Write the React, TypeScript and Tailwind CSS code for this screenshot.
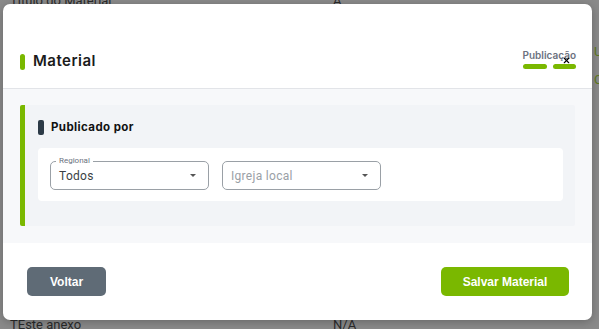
import { X } from "lucide-react";

function Select({ label, value, placeholder }: { label?: string; value?: string; placeholder?: string }) {
  return (
    <div className="relative w-[159px] h-[29px] rounded-[5px] border border-[#9aa0a6] flex items-center pl-[8px] pr-[12px]">
      {label && (
        <span className="absolute -top-[6px] left-[5px] px-[3px] bg-white text-[8px] leading-[10px] text-[#6b7280]">
          {label}
        </span>
      )}
      <span className={`flex-1 text-[12px] tracking-[0.3px] ${value ? "text-[#3a3f44]" : "text-[#9aa0a6]"}`}>
        {value ?? placeholder}
      </span>
      <svg width="6" height="3" viewBox="0 0 6 3">
        <path d="M0 0h6L3 3z" fill="#555" />
      </svg>
    </div>
  );
}

export default function App() {
  return (
    <div
      className="relative w-[599px] h-[329px] overflow-hidden bg-[#8a8a8a]"
      style={{ fontFamily: "Roboto, 'Liberation Sans', sans-serif" }}
    >
      {/* page behind the overlay */}
      <div className="absolute left-[10px] -top-[9px] text-[13px] text-[#2a2a2a]">Título do Material</div>
      <div className="absolute left-[333px] -top-[9px] text-[13px] text-[#2a2a2a]">A</div>
      <div className="absolute left-[10px] top-[315px] text-[13px] text-[#2a2a2a]">TEste anexo</div>
      <div className="absolute left-[333px] top-[315px] text-[13px] text-[#2a2a2a]">N/A</div>
      <div className="absolute left-[594px] top-[42px] text-[13px] text-[#5d7a1e]">U</div>
      <div className="absolute left-[594px] top-[70px] text-[13px] text-[#5d7a1e]">C</div>

      {/* modal */}
      <div className="absolute left-[3px] top-[4px] w-[589px] h-[316px] bg-white rounded-[7px] shadow-[0_2px_10px_rgba(0,0,0,0.25)] flex flex-col overflow-hidden">
        <div className="h-[85px] pt-[31px] pl-[17px] pr-[16px] flex items-center border-b border-[#e2e4e8]">
          <span className="w-[5px] h-[16px] rounded-full bg-[#7ab800]" />
          <span
            className="ml-[8px] text-[15px] font-semibold tracking-[0.5px] text-[#1b1b1b]"
            style={{ fontFamily: "Inter, sans-serif" }}
          >
            Material
          </span>
          <div className="ml-auto relative flex flex-col items-end mt-[-6px]">
            <span
              className="text-[10px] font-semibold text-[#6b7280] leading-[12px]"
              style={{ fontFamily: "Inter, sans-serif" }}
            >
              Publicação
            </span>
            <div className="flex gap-[6px] mt-[3px]">
              <span className="w-[24px] h-[5px] rounded-full bg-[#7ab800]" />
              <span className="w-[23px] h-[5px] rounded-full bg-[#7ab800]" />
            </div>
            <X className="absolute right-[5px] top-[7px] w-[9px] h-[9px] text-black" strokeWidth={3} />
          </div>
        </div>

        <div className="bg-[#f7f8fa] px-[17px] pt-[16px] pb-[17px]">
          <div className="border-l-[5px] border-[#7ab800] bg-[#f2f4f7] rounded-[2px] pl-[13px] pr-[12px] pt-[15px] pb-[25px]">
            <div className="flex items-center h-[15px]">
              <span className="w-[6px] h-[15px] rounded-[2px] bg-[#2c3a47]" />
              <span
                className="ml-[7px] text-[11.5px] font-bold tracking-[0.4px] text-[#111]"
                style={{ fontFamily: "Inter, sans-serif" }}
              >
                Publicado por
              </span>
            </div>
            <div className="mt-[13px] bg-white rounded-[4px] px-[12px] pt-[13px] pb-[11px] flex gap-[13px]">
              <Select label="Regional" value="Todos" />
              <Select placeholder="Igreja local" />
            </div>
          </div>
        </div>

        <div
          className="flex-1 flex items-start justify-between pl-[24px] pr-[23px] pt-[24px]"
          style={{ fontFamily: "'Liberation Sans', Arial, sans-serif" }}
        >
          <button className="w-[79px] h-[29px] rounded-[5px] bg-[#5f6b76] text-white text-[12px] font-bold">
            Voltar
          </button>
          <button className="w-[128px] h-[29px] rounded-[5px] bg-[#7ab800] text-white text-[12px] font-bold">
            Salvar Material
          </button>
        </div>
      </div>
    </div>
  );
}
